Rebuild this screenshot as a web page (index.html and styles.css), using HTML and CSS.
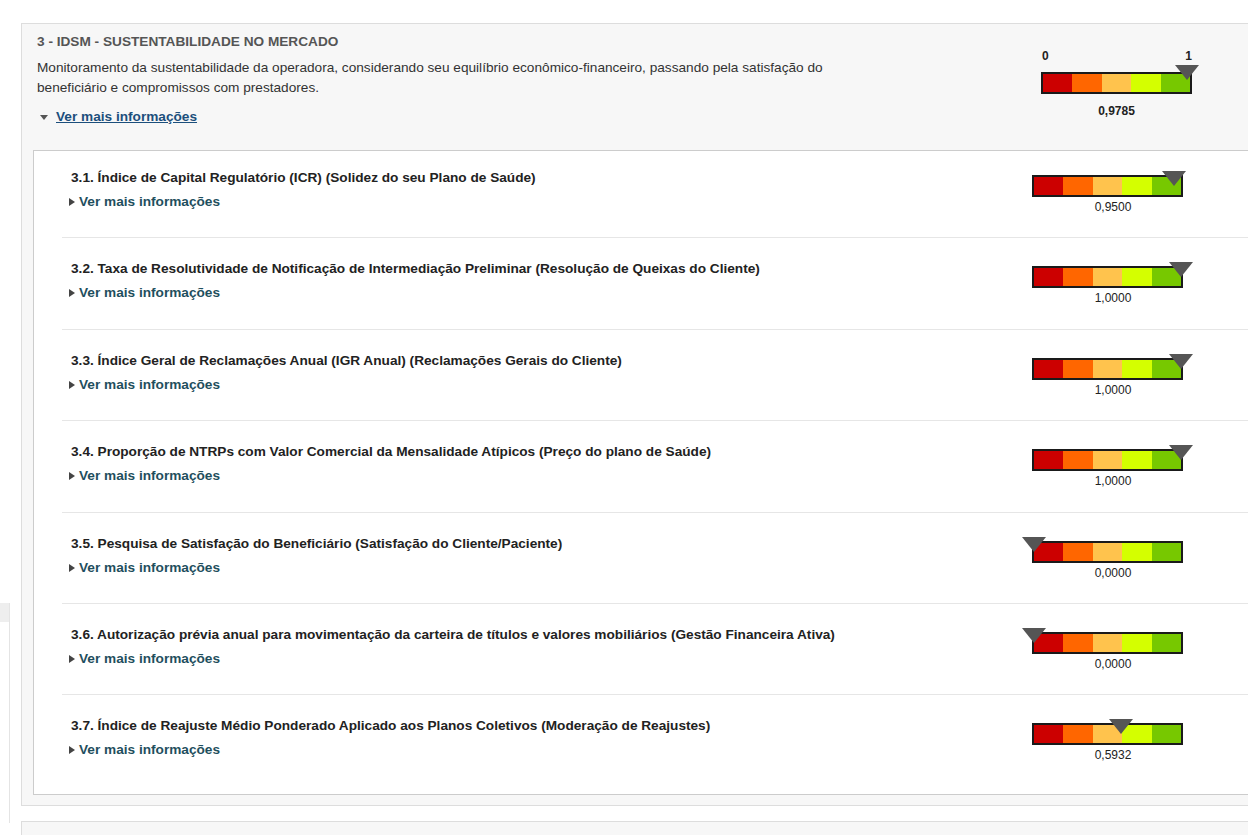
FILE: index.html
```html
<!DOCTYPE html>
<html lang="pt-BR">
<head>
    <meta charset="UTF-8">
    <title>IDSM - Sustentabilidade no Mercado</title>
    <link rel="stylesheet" href="styles.css">
</head>
<body>

<div class="page">
    <!-- left menu edge -->
    <aside class="sidebar">
        <div class="sidebar-tab"></div>
    </aside>

    <main class="content">
        <section class="dimension">
            <header class="dimension-head">
                <div class="dimension-info">
                    <h2 class="dimension-title">3 - IDSM - SUSTENTABILIDADE NO MERCADO</h2>
                    <p class="dimension-desc">Monitoramento da sustentabilidade da operadora, considerando seu equilíbrio econômico-financeiro, passando pela satisfação do beneficiário e compromissos com prestadores.</p>
                    <a class="more-link more-link--open" href="#">Ver mais informações</a>
                </div>
                <div class="gauge gauge--main">
                    <div class="gauge-scale"><span>0</span><span>1</span></div>
                    <div class="gauge-bar">
                        <span class="seg seg-1"></span><span class="seg seg-2"></span><span class="seg seg-3"></span><span class="seg seg-4"></span><span class="seg seg-5"></span>
                        <span class="marker" style="left: calc(97.85% - 12px)"></span>
                    </div>
                    <div class="gauge-value">0,9785</div>
                </div>
            </header>

            <div class="indicators">
                <div class="indicator">
                    <div class="indicator-text">
                        <h3 class="indicator-title">3.1. Índice de Capital Regulatório (ICR) (Solidez do seu Plano de Saúde)</h3>
                        <a class="more-link" href="#">Ver mais informações</a>
                    </div>
                    <div class="gauge">
                        <div class="gauge-bar">
                            <span class="seg seg-1"></span><span class="seg seg-2"></span><span class="seg seg-3"></span><span class="seg seg-4"></span><span class="seg seg-5"></span>
                            <span class="marker" style="left: calc(95% - 12px)"></span>
                        </div>
                        <div class="gauge-value">0,9500</div>
                    </div>
                </div>

                <div class="indicator">
                    <div class="indicator-text">
                        <h3 class="indicator-title">3.2. Taxa de Resolutividade de Notificação de Intermediação Preliminar (Resolução de Queixas do Cliente)</h3>
                        <a class="more-link" href="#">Ver mais informações</a>
                    </div>
                    <div class="gauge">
                        <div class="gauge-bar">
                            <span class="seg seg-1"></span><span class="seg seg-2"></span><span class="seg seg-3"></span><span class="seg seg-4"></span><span class="seg seg-5"></span>
                            <span class="marker" style="left: calc(100% - 12px)"></span>
                        </div>
                        <div class="gauge-value">1,0000</div>
                    </div>
                </div>

                <div class="indicator">
                    <div class="indicator-text">
                        <h3 class="indicator-title">3.3. Índice Geral de Reclamações Anual (IGR Anual) (Reclamações Gerais do Cliente)</h3>
                        <a class="more-link" href="#">Ver mais informações</a>
                    </div>
                    <div class="gauge">
                        <div class="gauge-bar">
                            <span class="seg seg-1"></span><span class="seg seg-2"></span><span class="seg seg-3"></span><span class="seg seg-4"></span><span class="seg seg-5"></span>
                            <span class="marker" style="left: calc(100% - 12px)"></span>
                        </div>
                        <div class="gauge-value">1,0000</div>
                    </div>
                </div>

                <div class="indicator">
                    <div class="indicator-text">
                        <h3 class="indicator-title">3.4. Proporção de NTRPs com Valor Comercial da Mensalidade Atípicos (Preço do plano de Saúde)</h3>
                        <a class="more-link" href="#">Ver mais informações</a>
                    </div>
                    <div class="gauge">
                        <div class="gauge-bar">
                            <span class="seg seg-1"></span><span class="seg seg-2"></span><span class="seg seg-3"></span><span class="seg seg-4"></span><span class="seg seg-5"></span>
                            <span class="marker" style="left: calc(100% - 12px)"></span>
                        </div>
                        <div class="gauge-value">1,0000</div>
                    </div>
                </div>

                <div class="indicator">
                    <div class="indicator-text">
                        <h3 class="indicator-title">3.5. Pesquisa de Satisfação do Beneficiário (Satisfação do Cliente/Paciente)</h3>
                        <a class="more-link" href="#">Ver mais informações</a>
                    </div>
                    <div class="gauge">
                        <div class="gauge-bar">
                            <span class="seg seg-1"></span><span class="seg seg-2"></span><span class="seg seg-3"></span><span class="seg seg-4"></span><span class="seg seg-5"></span>
                            <span class="marker" style="left: calc(0% - 12px)"></span>
                        </div>
                        <div class="gauge-value">0,0000</div>
                    </div>
                </div>

                <div class="indicator">
                    <div class="indicator-text">
                        <h3 class="indicator-title">3.6. Autorização prévia anual para movimentação da carteira de títulos e valores mobiliários (Gestão Financeira Ativa)</h3>
                        <a class="more-link" href="#">Ver mais informações</a>
                    </div>
                    <div class="gauge">
                        <div class="gauge-bar">
                            <span class="seg seg-1"></span><span class="seg seg-2"></span><span class="seg seg-3"></span><span class="seg seg-4"></span><span class="seg seg-5"></span>
                            <span class="marker" style="left: calc(0% - 12px)"></span>
                        </div>
                        <div class="gauge-value">0,0000</div>
                    </div>
                </div>

                <div class="indicator">
                    <div class="indicator-text">
                        <h3 class="indicator-title">3.7. Índice de Reajuste Médio Ponderado Aplicado aos Planos Coletivos (Moderação de Reajustes)</h3>
                        <a class="more-link" href="#">Ver mais informações</a>
                    </div>
                    <div class="gauge">
                        <div class="gauge-bar">
                            <span class="seg seg-1"></span><span class="seg seg-2"></span><span class="seg seg-3"></span><span class="seg seg-4"></span><span class="seg seg-5"></span>
                            <span class="marker" style="left: calc(59.32% - 12px)"></span>
                        </div>
                        <div class="gauge-value">0,5932</div>
                    </div>
                </div>
            </div>
        </section>

        <section class="dimension dimension--next"></section>
    </main>
</div>

</body>
</html>
```

FILE: styles.css
```css
body {
    margin: 0;
    background: #fff;
    font-family: "Liberation Sans", Arial, sans-serif;
    font-size: 13.65px;
    color: #333;
    overflow: hidden;
}

.page {
    display: flex;
    align-items: flex-start;
    height: 835px;
}

/* Sidebar edge */
.sidebar {
    width: 9px;
    flex: 0 0 9px;
    margin-top: 603px;
    height: 220px;
    border-right: 1px solid #e4e4e4;
}

.sidebar-tab {
    height: 19px;
    background: #eeeeee;
}

.content {
    margin-left: 11px;
    padding-top: 23px;
    width: 1260px;
    flex: 0 0 1260px;
}

/* Dimension panel */
.dimension {
    background: #f7f7f7;
    border: 1px solid #dddddd;
    padding: 10px 0 10px 0;
}

.dimension--next {
    margin-top: 15px;
    height: 40px;
    padding: 0;
}

.dimension-head {
    display: flex;
    padding-left: 15px;
}

.dimension-info {
    flex: 0 0 1004px;
}

.dimension-title {
    margin: 0;
    font-size: 13.65px;
    line-height: 16px;
    font-weight: bold;
    color: #555;
}

.dimension-desc {
    margin: 8px 0 0;
    width: 810px;
    font-size: 13.65px;
    line-height: 20px;
    color: #333;
}

/* Links */
.more-link {
    display: flex;
    align-items: center;
    width: max-content;
    font-size: 13.65px;
    line-height: 16px;
    font-weight: bold;
    color: #1f4f5e;
    text-decoration: none;
}

.more-link::before {
    content: "";
    width: 0;
    height: 0;
    margin-left: -2px;
    margin-right: 4px;
    border-top: 4.5px solid transparent;
    border-bottom: 4.5px solid transparent;
    border-left: 6px solid #444;
}

.more-link--open {
    margin-top: 11px;
    color: #1c4f7c;
    text-decoration: underline;
}

.more-link--open::before {
    margin-left: 3px;
    margin-right: 8px;
    border-left: 4.5px solid transparent;
    border-right: 4.5px solid transparent;
    border-top: 5px solid #555;
    border-bottom: 0;
}

/* Indicator list */
.indicators {
    margin: 25px 0 0 11px;
    background: #fff;
    border: 1px solid #cccccc;
    padding-bottom: 10px;
}

.indicator {
    display: flex;
    margin-left: 28px;
    padding: 23px 0 23.4px 9px;
    border-bottom: 1px solid #e6e6e6;
}

.indicator:first-child {
    padding-top: 19px;
}

.indicator:last-child {
    border-bottom: none;
    padding-bottom: 22px;
}

.indicator-text {
    flex: 0 0 961px;
}

.indicator-title {
    margin: 0 0 8px;
    font-size: 13.65px;
    line-height: 16px;
    font-weight: bold;
    color: #222;
}

/* Gauge */
.gauge {
    width: 151px;
    padding-top: 5px;
    line-height: 14px;
}

.gauge--main {
    padding-top: 15px;
}

.gauge-scale {
    display: flex;
    justify-content: space-between;
    padding: 0 0 0 1px;
    margin-bottom: 9px;
    font-size: 12px;
    line-height: 14px;
    font-weight: bold;
    color: #222;
}

.gauge-bar {
    position: relative;
    display: flex;
    height: 22px;
    box-sizing: border-box;
    border: 2px solid #1a1a1a;
}

.seg {
    flex: 1;
}

.seg-1 { background: #cc0000; }
.seg-2 { background: #ff6600; }
.seg-3 { background: #ffc34d; }
.seg-4 { background: #d4ff00; }
.seg-5 { background: #77c800; }

.marker {
    position: absolute;
    top: -6px;
    width: 0;
    height: 0;
    border-left: 12px solid transparent;
    border-right: 12px solid transparent;
    border-top: 15px solid #555;
}

.gauge--main .marker {
    top: -9px;
}

.gauge-value {
    margin-top: 3px;
    padding-left: 11px;
    text-align: center;
    font-size: 12px;
    line-height: 14px;
    color: #222;
}

.gauge--main .gauge-value {
    margin-top: 10px;
    padding-left: 0;
    font-weight: bold;
}
```
